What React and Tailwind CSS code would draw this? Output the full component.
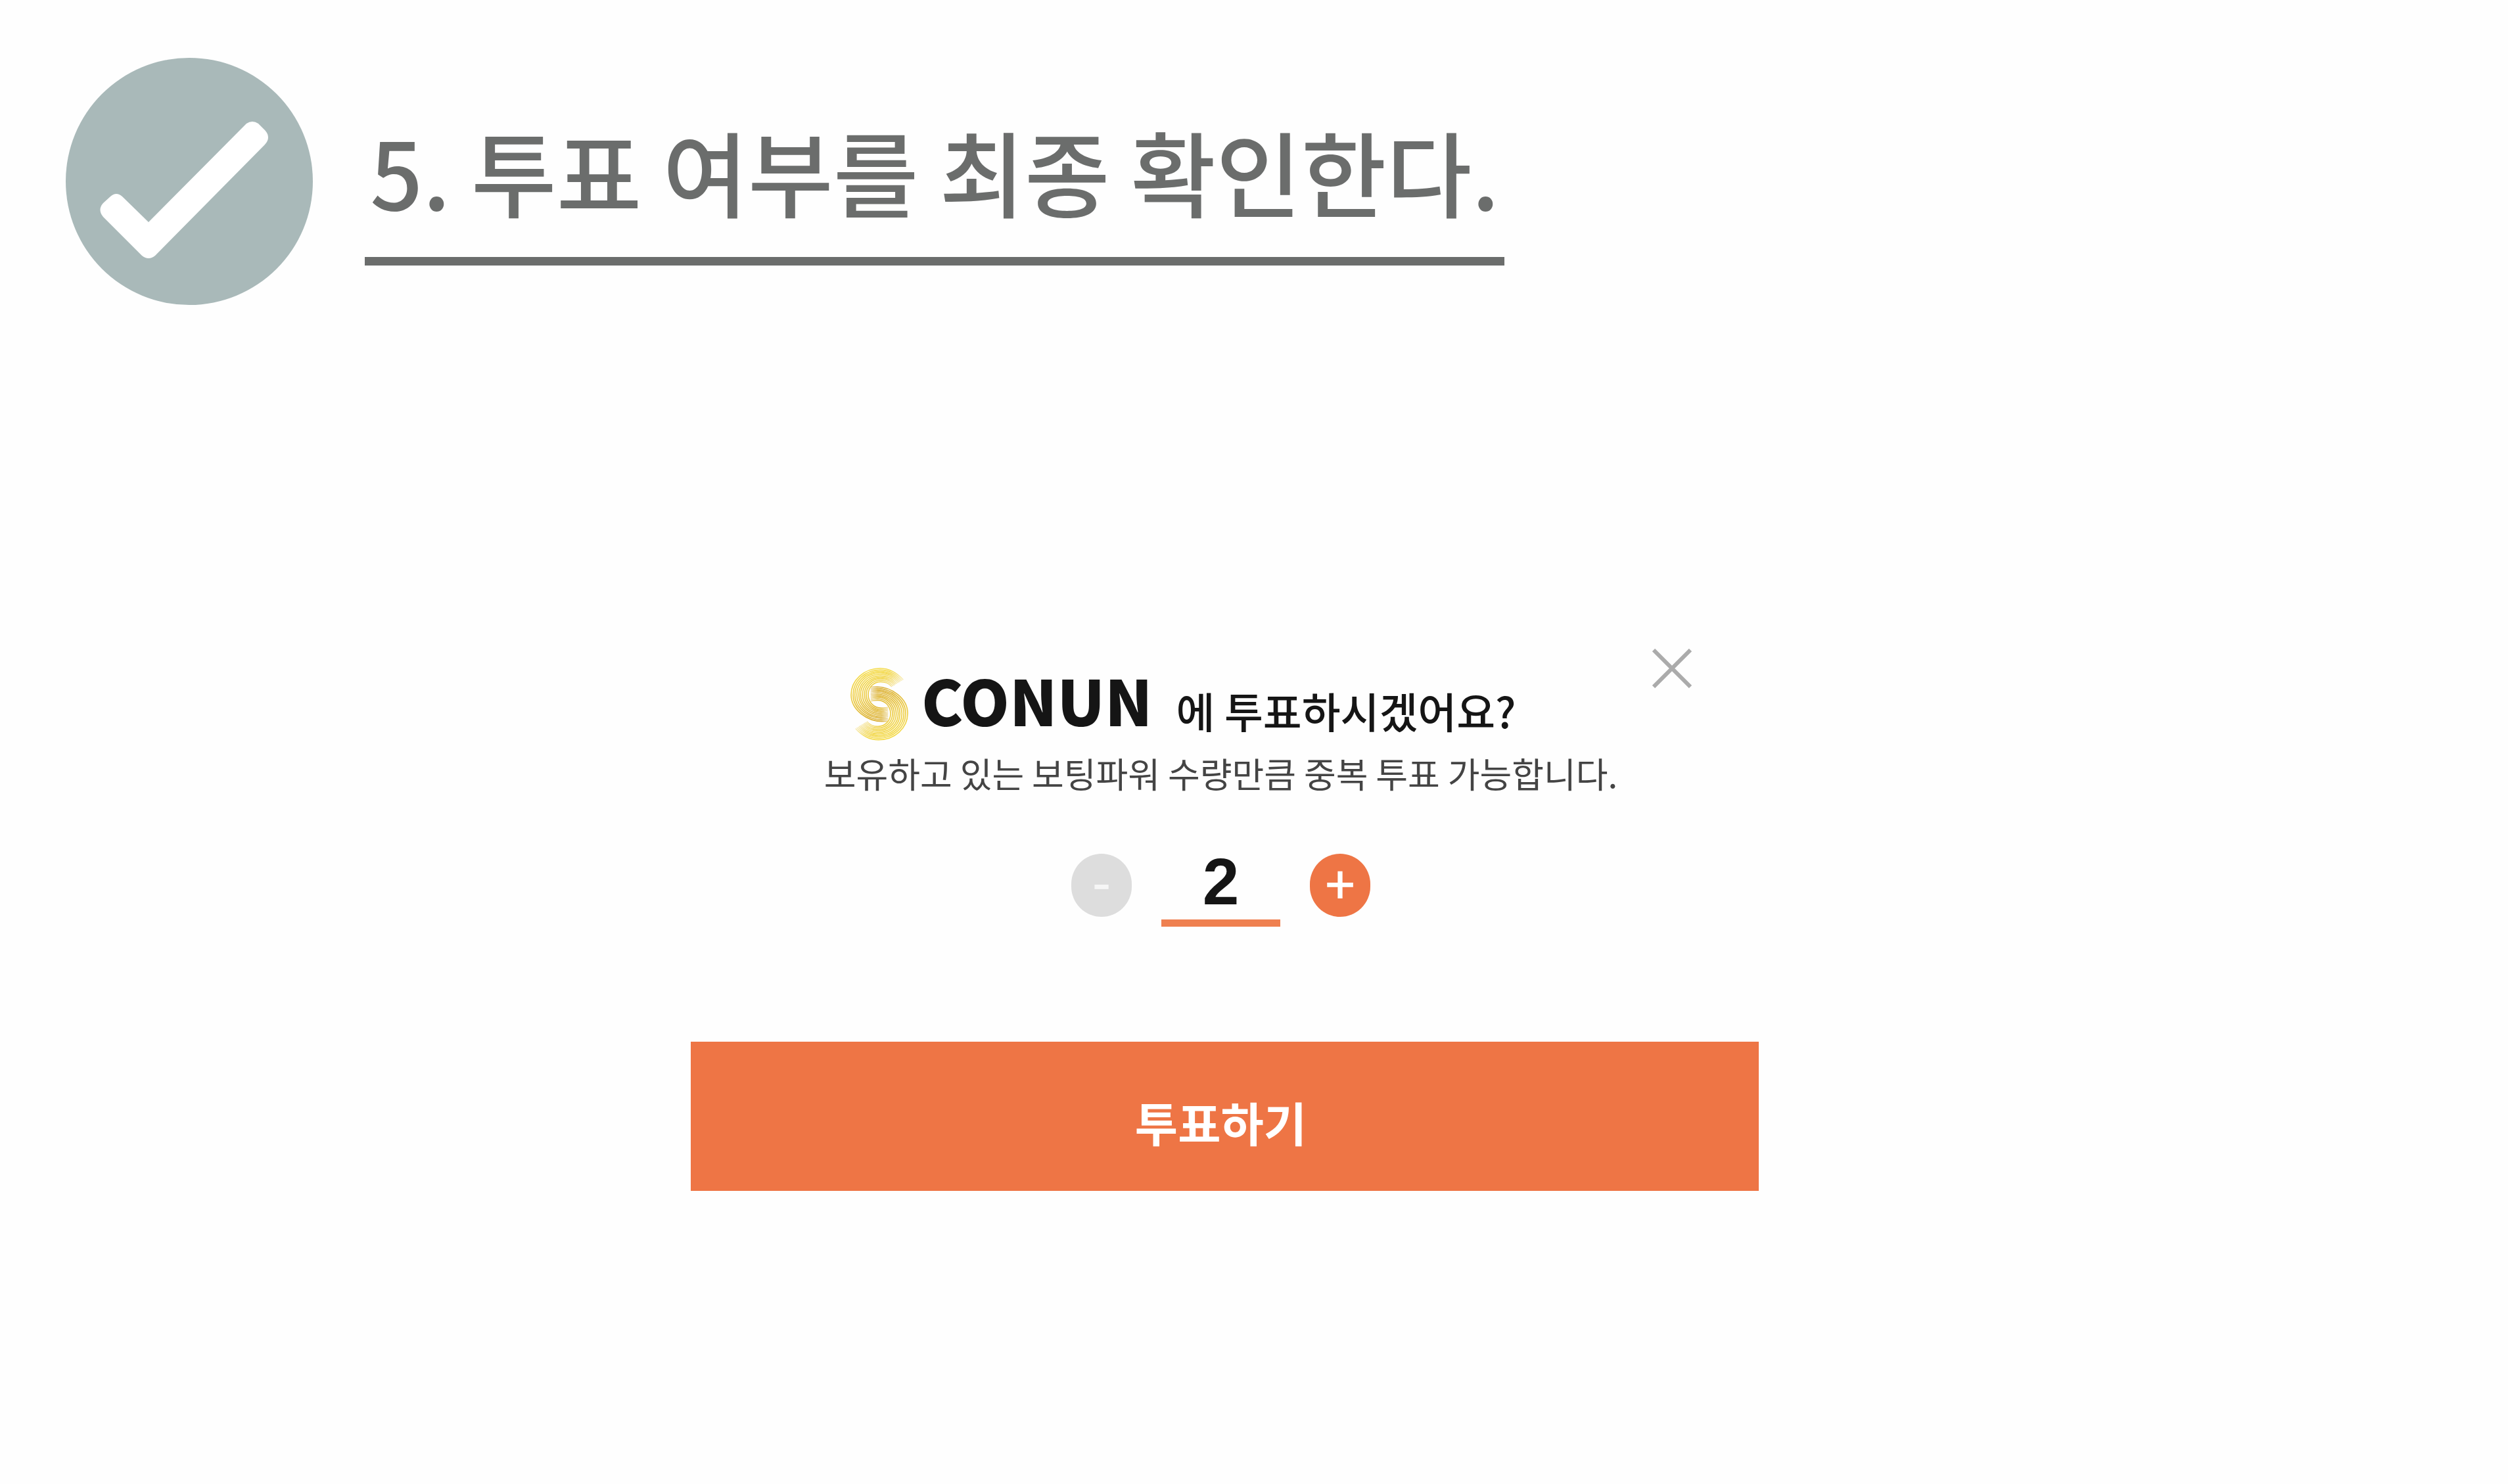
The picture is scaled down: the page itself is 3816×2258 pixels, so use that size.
import { useState } from "react";

const LOGO_LINES = 10;

// control points of the outermost and innermost line of one half of the S
const OUTER = [315, 103, 285, 70, 250, 51, 210, 51, 135, 51, 77, 105, 77, 172, 77, 240, 150, 293, 220, 293, 230, 293, 238, 293, 246, 292];
const INNER = [263, 135, 250, 118, 232, 112, 212, 112, 178, 112, 155, 140, 155, 170, 155, 205, 180, 232, 215, 232, 226, 232, 238, 231, 246, 227];

function logoLine(i) {
  const t = i / (LOGO_LINES - 1);
  const p = OUTER.map((v, k) => Math.round(v + (INNER[k] - v) * t));
  return `M${p[0]} ${p[1]}C${p.slice(2).join(" ")}`;
}

function LogoHalf({ transform }) {
  return (
    <g transform={transform} fill="none" stroke="url(#gold)" strokeWidth="5" mask="url(#tails)">
      {Array.from({ length: LOGO_LINES }, (_, i) => (
        <path key={i} d={logoLine(i)} />
      ))}
    </g>
  );
}

function ConunMark() {
  return (
    <svg viewBox="74 48 264 333" className="w-[88px] h-[111px] shrink-0" aria-hidden="true">
      <defs>
        <linearGradient id="gold" gradientUnits="userSpaceOnUse" x1="150" y1="51" x2="210" y2="293">
          <stop offset="0" stopColor="#f6de4f" />
          <stop offset="0.5" stopColor="#eccb45" />
          <stop offset="1" stopColor="#d9ae35" />
        </linearGradient>
        {/* both tails of every line thin out */}
        <linearGradient id="tailTop" gradientUnits="userSpaceOnUse" x1="245" y1="75" x2="292" y2="122">
          <stop offset="0" stopColor="#fff" />
          <stop offset="1" stopColor="#555" />
        </linearGradient>
        <linearGradient id="tailBottom" gradientUnits="userSpaceOnUse" x1="215" y1="0" x2="250" y2="0">
          <stop offset="0" stopColor="#fff" />
          <stop offset="1" stopColor="#555" />
        </linearGradient>
        <mask id="tails" maskUnits="userSpaceOnUse" x="70" y="44" width="272" height="341">
          <rect x="70" y="44" width="272" height="156" fill="url(#tailTop)" />
          <rect x="70" y="200" width="272" height="185" fill="url(#tailBottom)" />
          <rect x="70" y="130" width="110" height="80" fill="#fff" />
        </mask>
      </defs>
      <LogoHalf />
      <LogoHalf transform="rotate(180 206 214)" />
    </svg>
  );
}

function CheckBadge() {
  return (
    <svg viewBox="0 0 376 376" className="w-[376px] h-[376px] shrink-0" aria-hidden="true">
      <circle cx="188" cy="188" r="188" fill="#a9b9b9" />
      <path
        fill="#fff"
        d="M126 250 L86 211 Q77 203 68 211 L57 221 Q48 231 57 242 L116 301 Q126 309 136 301 L303 132 Q313 121 303 110 L293 100 Q284 94 275 100 Z"
      />
    </svg>
  );
}

function Stepper() {
  const [count, setCount] = useState(2);

  return (
    <div className="flex items-start justify-center gap-[45px]">
      <button
        type="button"
        aria-label="투표 수 줄이기"
        onClick={() => setCount(Math.max(1, count - 1))}
        className="flex items-center justify-center w-[92px] h-24 pb-5 rounded-full bg-[#dddddd] text-[#f6f6f6] text-[80px] leading-none font-medium"
      >
        -
      </button>
      <input
        type="text"
        inputMode="numeric"
        aria-label="투표 수"
        value={count}
        onChange={(e) => setCount(Number(e.target.value) || 0)}
        className="w-[181px] h-[111px] pb-4 border-b-[11px] border-[#ef8050] bg-transparent text-center text-[100px] leading-none font-bold text-[#151515] font-['Liberation_Sans',sans-serif] outline-none"
      />
      <button
        type="button"
        aria-label="투표 수 늘리기"
        onClick={() => setCount(count + 1)}
        className="flex items-center justify-center w-[92px] h-24 pb-3 rounded-full bg-[#ee7545] text-white text-[80px] leading-none font-medium"
      >
        +
      </button>
    </div>
  );
}

function VoteDialog() {
  return (
    <section role="dialog" aria-labelledby="vote-title" className="w-full max-w-[1625px] flex flex-col">
      <div className="flex items-start justify-between pl-[243px] pr-[102px]">
        <h2 id="vote-title" className="flex items-start mt-[29px] text-[#151515]">
          <ConunMark />
          <span className="ml-5 text-[95px] leading-[96px] font-black">CONUN</span>
          <span className="ml-9 mt-4 text-[64px] leading-[96px] font-medium whitespace-nowrap">
            에 투표하시겠어요?
          </span>
        </h2>
        <button type="button" aria-label="닫기" className="shrink-0">
          <svg viewBox="0 0 60 60" className="w-[60px] h-[60px]" fill="none" stroke="#ababab" strokeWidth="6">
            <path d="M2 2L58 58M58 2L2 58" />
          </svg>
        </button>
      </div>
      <div className="mt-2 pr-3">
        <p className="mb-[83px] text-center text-[53px] leading-[80px] text-[#444444] whitespace-nowrap">
          보유하고 있는 보팅파워 수량만큼 중복 투표 가능합니다.
        </p>
        <Stepper />
      </div>
      <button
        type="button"
        className="mt-[175px] h-[227px] w-full pt-4 pr-3 bg-[#ee7545] text-white text-[71px] leading-none font-bold"
      >
        투표하기
      </button>
    </section>
  );
}

export default function App() {
  return (
    <main className="min-h-screen bg-[#fefefe] font-['Noto_Sans_CJK_KR',sans-serif]">
      <header className="flex items-start gap-[79px] pl-[100px] pt-[88px]">
        <CheckBadge />
        <h1 className="mt-[71px] px-2 pb-8 border-b-[13px] border-[#6b6d6c] text-[141px] leading-[200px] font-medium text-[#6b6d6c] whitespace-nowrap">
          5. 투표 여부를 최종 확인한다.
        </h1>
      </header>
      <div className="flex justify-center mt-[523px] pr-[89px]">
        <VoteDialog />
      </div>
    </main>
  );
}
